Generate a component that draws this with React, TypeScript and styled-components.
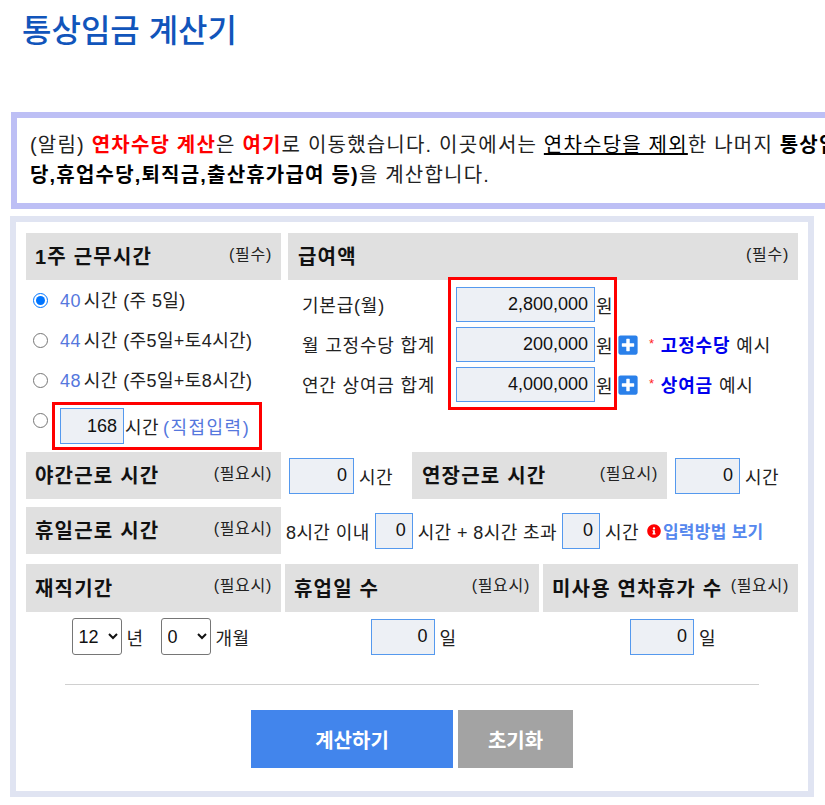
import styled, { createGlobalStyle } from "styled-components";
import { FaPlusSquare, FaInfoCircle } from "react-icons/fa";

const GlobalStyle = createGlobalStyle`
  html, body {
    margin: 0;
    padding: 0;
    background: #fff;
    overflow-x: hidden;
  }
  body {
    font-family: "Liberation Sans", "Noto Sans CJK KR", sans-serif;
    font-size: 18px;
    color: #222;
  }
`;

const Page = styled.div`
  width: 825px;
  height: 805px;
  overflow: hidden;
`;

const Title = styled.h1`
  margin: 0;
  padding: 11px 0 0 22px;
  height: 112px;
  box-sizing: border-box;
  font-size: 32px;
  line-height: 40px;
  font-weight: 500;
  color: #1155bb;
`;

const Notice = styled.div`
  box-sizing: border-box;
  width: 900px;
  height: 97px;
  margin-left: 11px;
  padding: 12px 13px 0;
  border: 6px solid #bdbff5;
  font-size: 20px;
  letter-spacing: 1.2px;
  line-height: 30px;
  white-space: nowrap;
  color: #222;
`;

const Red = styled.b`
  color: #ff0000;
`;

const Strong = styled.b`
  color: #000;
`;

const Under = styled.span`
  color: #000;
  text-decoration: underline;
`;

const Form = styled.div`
  box-sizing: border-box;
  width: 804px;
  height: 581px;
  margin: 7px 0 0 10px;
  padding: 11px 10px 0;
  border: 6px solid #e0e4f2;
`;

const TopRow = styled.div`
  display: flex;
  gap: 7px;
`;

const LeftCol = styled.div`
  width: 255px;
  height: 219px;
`;

const RightCol = styled.div`
  width: 510px;
`;

const HeadBox = styled.div`
  box-sizing: border-box;
  display: flex;
  align-items: center;
  justify-content: space-between;
  height: ${(p) => p.$h ?? 47}px;
  padding: 0 9px 0 ${(p) => p.$left ?? 9}px;
  background: #e0e0e0;
`;

const HeadTitle = styled.span`
  font-size: 20px;
  font-weight: 700;
  letter-spacing: 1.2px;
  color: #111;
  white-space: nowrap;
  margin-bottom: 2px;
`;

const Hint = styled.span`
  font-size: 16px;
  letter-spacing: 0.7px;
  color: #222;
  white-space: nowrap;
  margin-bottom: 8px;
`;

const RadioRow = styled.label`
  display: flex;
  align-items: center;
  height: 40px;
  padding-left: 7px;
  gap: 12px;
  font-size: 18px;
  letter-spacing: 0.4px;
  white-space: nowrap;
`;

const RadioText = styled.span`
  margin-bottom: 2px;
`;

const Radio = styled.input.attrs({ type: "radio", name: "hours" })`
  width: 15px;
  height: 15px;
  margin: 0;
  flex: none;
`;

const Blue = styled.span`
  color: #5577dd;
  margin-right: 3px;
`;

const DirectRow = styled.div`
  display: flex;
  align-items: flex-start;
  padding-left: 7px;
  font-size: 18px;
  letter-spacing: 0.4px;
`;

const DirectRadio = styled(Radio)`
  margin-top: 13px;
`;

const DirectBox = styled.div`
  box-sizing: border-box;
  display: flex;
  align-items: center;
  gap: 1px;
  width: 210px;
  height: 48px;
  margin: 2px 0 0 4px;
  padding-left: 5px;
  border: 3px solid #ff0000;
  white-space: nowrap;
`;

const Direct = styled.span`
  color: #5577dd;
  margin-left: 3px;
  letter-spacing: 1.5px;
`;

const Field = styled.input.attrs({ type: "text" })`
  box-sizing: border-box;
  flex: none;
  width: ${(p) => p.$w}px;
  height: 36px;
  padding: 0 6px 0 0;
  border: 1px solid #5599ee;
  background: #edf0f5;
  font-family: inherit;
  font-size: 18px;
  letter-spacing: 0;
  color: #111;
  text-align: right;
  outline: none;
`;

const PayBody = styled.div`
  display: flex;
  padding-left: 14px;
`;

const PayLabels = styled.div`
  display: flex;
  flex-direction: column;
  gap: 5px;
  width: 146px;
  padding-top: 7px;
`;

const PayLine = styled.div`
  box-sizing: border-box;
  display: flex;
  align-items: center;
  height: 35px;
  padding-bottom: 2px;
  font-size: 18px;
  letter-spacing: 0.8px;
  white-space: nowrap;
`;

const PayBox = styled.div`
  box-sizing: border-box;
  position: relative;
  display: flex;
  flex-direction: column;
  gap: 5px;
  width: 169px;
  height: 133px;
  margin-top: -3px;
  padding: 7px 0 0 5px;
  border: 3px solid #ff0000;
`;

const PayField = styled.div`
  display: flex;
  align-items: center;
  gap: 1px;
  height: 35px;
  font-size: 18px;

  input {
    height: 35px;
  }
`;

const PayNotes = styled.div`
  display: flex;
  flex-direction: column;
  gap: 5px;
  padding: 7px 0 0 1px;
`;

const PlusIcon = styled(FaPlusSquare)`
  width: 20px;
  height: 22px;
  color: #2a80ea;
  margin: 2px 11px 0 0;
`;

const Star = styled.span`
  color: #ff2222;
  font-size: 13px;
  margin-right: 6px;
`;

const NoteLink = styled.b`
  color: #0000ee;
  margin-right: 6px;
`;

const Row = styled.div`
  display: flex;
  margin-top: ${(p) => p.$top ?? 0}px;
`;

const Unit = styled.div`
  display: flex;
  align-items: center;
  gap: 5px;
  width: ${(p) => p.$w}px;
  padding-left: 8px;
  box-sizing: border-box;
  font-size: 18px;
  letter-spacing: 0.4px;
  white-space: nowrap;
`;

const Fixed = styled.div`
  width: 255px;
  flex: none;
`;

const HolidayLine = styled.div`
  display: flex;
  align-items: center;
  gap: 5px;
  padding-left: 5px;
  font-size: 18px;
  letter-spacing: 0.4px;
  white-space: nowrap;
`;

const HowTo = styled.span`
  display: flex;
  align-items: center;
  gap: 2px;
  margin-left: 3px;
  font-size: 17px;
  font-weight: 700;
  letter-spacing: 0.3px;
  color: #5588ee;

  svg {
    width: 14px;
    height: 14px;
    color: #ff0000;
  }
`;

const Triple = styled.div`
  display: grid;
  grid-template-columns: 255px 254px 255px;
  column-gap: 4px;
  margin-top: ${(p) => p.$top}px;
`;

const Center = styled.div`
  display: flex;
  align-items: center;
  justify-content: center;
  gap: 5px;
  font-size: 18px;
  letter-spacing: 0.4px;
  padding-left: ${(p) => p.$left ?? 0}px;
`;

const Picker = styled.select`
  width: 50px;
  height: 37px;
  font-family: inherit;
  font-size: 18px;
  color: #111;
  background: #fff;
  border: 1px solid #767676;
  border-radius: 3px;
  padding: 0 0 0 2px;
`;

const PickerGap = styled.span`
  width: 7px;
`;

const Divider = styled.hr`
  height: 1px;
  margin: 29px 39px 25px;
  border: none;
  background: #d0d0d0;
`;

const Buttons = styled.div`
  display: flex;
  justify-content: center;
  gap: 5px;
`;

const Button = styled.button`
  width: ${(p) => p.$w}px;
  height: 58px;
  border: none;
  background: ${(p) => p.$bg};
  color: #fff;
  font-family: inherit;
  font-size: 20px;
  font-weight: 700;
`;

function App() {
  return (
    <Page>
      <GlobalStyle />
      <Title>통상임금 계산기</Title>
      <Notice>
        (알림) <Red>연차수당 계산</Red>은 <Red>여기</Red>로 이동했습니다. 이곳에서는{" "}
        <Under>연차수당을 제외</Under>한 나머지 <Strong>통상임금(연장수당,야간수</Strong>
        <br />
        <Strong>당,휴업수당,퇴직금,출산휴가급여 등)</Strong>을 계산합니다.
      </Notice>
      <Form>
        <TopRow>
          <LeftCol>
            <HeadBox>
              <HeadTitle>1주 근무시간</HeadTitle>
              <Hint>(필수)</Hint>
            </HeadBox>
            <RadioRow>
              <Radio defaultChecked />
              <RadioText>
                <Blue>40</Blue>시간 (주 5일)
              </RadioText>
            </RadioRow>
            <RadioRow>
              <Radio />
              <RadioText>
                <Blue>44</Blue>시간 (주5일+토4시간)
              </RadioText>
            </RadioRow>
            <RadioRow>
              <Radio />
              <RadioText>
                <Blue>48</Blue>시간 (주5일+토8시간)
              </RadioText>
            </RadioRow>
            <DirectRow>
              <DirectRadio />
              <DirectBox>
                <Field $w={64} defaultValue="168" />
                시간
                <Direct>(직접입력)</Direct>
              </DirectBox>
            </DirectRow>
          </LeftCol>
          <RightCol>
            <HeadBox $left={10}>
              <HeadTitle>급여액</HeadTitle>
              <Hint>(필수)</Hint>
            </HeadBox>
            <PayBody>
              <PayLabels>
                <PayLine>기본급(월)</PayLine>
                <PayLine>월 고정수당 합계</PayLine>
                <PayLine>연간 상여금 합계</PayLine>
              </PayLabels>
              <PayBox>
                <PayField>
                  <Field $w={139} defaultValue="2,800,000" />원
                </PayField>
                <PayField>
                  <Field $w={139} defaultValue="200,000" />원
                </PayField>
                <PayField>
                  <Field $w={139} defaultValue="4,000,000" />원
                </PayField>
              </PayBox>
              <PayNotes>
                <PayLine />
                <PayLine>
                  <PlusIcon />
                  <Star>*</Star>
                  <NoteLink>고정수당</NoteLink>예시
                </PayLine>
                <PayLine>
                  <PlusIcon />
                  <Star>*</Star>
                  <NoteLink>상여금</NoteLink>예시
                </PayLine>
              </PayNotes>
            </PayBody>
          </RightCol>
        </TopRow>

        <Row>
          <Fixed>
            <HeadBox>
              <HeadTitle>야간근로 시간</HeadTitle>
              <Hint>(필요시)</Hint>
            </HeadBox>
          </Fixed>
          <Unit $w={131}>
            <Field $w={65} defaultValue="0" />
            시간
          </Unit>
          <Fixed>
            <HeadBox $left={10}>
              <HeadTitle>연장근로 시간</HeadTitle>
              <Hint>(필요시)</Hint>
            </HeadBox>
          </Fixed>
          <Unit $w={120}>
            <Field $w={65} defaultValue="0" />
            시간
          </Unit>
        </Row>

        <Row $top={8}>
          <Fixed>
            <HeadBox>
              <HeadTitle>휴일근로 시간</HeadTitle>
              <Hint>(필요시)</Hint>
            </HeadBox>
          </Fixed>
          <HolidayLine>
            8시간 이내
            <Field $w={38} defaultValue="0" />
            시간 + 8시간 초과
            <Field $w={38} defaultValue="0" />
            시간
            <HowTo>
              <FaInfoCircle />
              입력방법 보기
            </HowTo>
          </HolidayLine>
        </Row>

        <Triple $top={10}>
          <HeadBox $h={48}>
            <HeadTitle>재직기간</HeadTitle>
            <Hint>(필요시)</Hint>
          </HeadBox>
          <HeadBox $h={48}>
            <HeadTitle>휴업일 수</HeadTitle>
            <Hint>(필요시)</Hint>
          </HeadBox>
          <HeadBox $h={48}>
            <HeadTitle>미사용 연차휴가 수</HeadTitle>
            <Hint>(필요시)</Hint>
          </HeadBox>
        </Triple>

        <Triple $top={6}>
          <Center $left={14}>
            <Picker defaultValue="12">
              <option>12</option>
            </Picker>
            년
            <PickerGap />
            <Picker defaultValue="0">
              <option>0</option>
            </Picker>
            개월
          </Center>
          <Center $left={3}>
            <Field $w={64} defaultValue="0" />일
          </Center>
          <Center $left={5}>
            <Field $w={64} defaultValue="0" />일
          </Center>
        </Triple>

        <Divider />

        <Buttons>
          <Button $w={202} $bg="#4285ec">
            계산하기
          </Button>
          <Button $w={115} $bg="#a3a3a3">
            초기화
          </Button>
        </Buttons>
      </Form>
    </Page>
  );
}

export default App;
